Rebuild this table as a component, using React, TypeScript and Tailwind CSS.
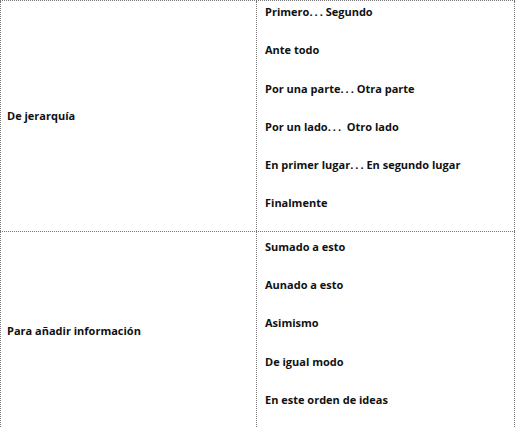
export default function App() {
  const groups = [
    {
      label: "De jerarquía",
      items: [
        "Primero... Segundo",
        "Ante todo",
        "Por una parte... Otra parte",
        "Por un lado...  Otro lado",
        "En primer lugar... En segundo lugar",
        "Finalmente",
      ],
    },
    {
      label: "Para añadir información",
      items: [
        "Sumado a esto",
        "Aunado a esto",
        "Asimismo",
        "De igual modo",
        "En este orden de ideas",
      ],
    },
  ];

  // the dots in the original are set wider than the font's own periods
  const renderItem = (text: string) =>
    text.split("...").map((part, i, arr) => (
      <span key={i}>
        {part}
        {i < arr.length - 1 && (
          <>
            <span className="tracking-[2px]">..</span>.
          </>
        )}
      </span>
    ));

  return (
    <div className="min-h-screen bg-white overflow-hidden">
      <div
        className="w-[515px] border-t border-dotted border-[#777] text-[11px] leading-[14px] font-bold text-[#111]"
        style={{ fontFamily: '"Open Sans", sans-serif' }}
      >
        {groups.map((g, gi) => (
          <div
            key={g.label}
            className={`grid grid-cols-[257px_258px] ${gi > 0 ? "border-t border-dotted border-[#777]" : ""}`}
          >
            <div className="flex items-center pl-[6px] border-l border-r border-dotted border-[#777]">
              {g.label}
            </div>
            <div className={`border-r border-dotted border-[#777] pl-[8px] ${gi > 0 ? "pt-[4px] pb-[2px]" : ""}`}>
              {g.items.map((it) => (
                <div key={it} className="h-[38.3px] pt-[4px] whitespace-pre">
                  {renderItem(it)}
                </div>
              ))}
            </div>
          </div>
        ))}
      </div>
    </div>
  );
}
